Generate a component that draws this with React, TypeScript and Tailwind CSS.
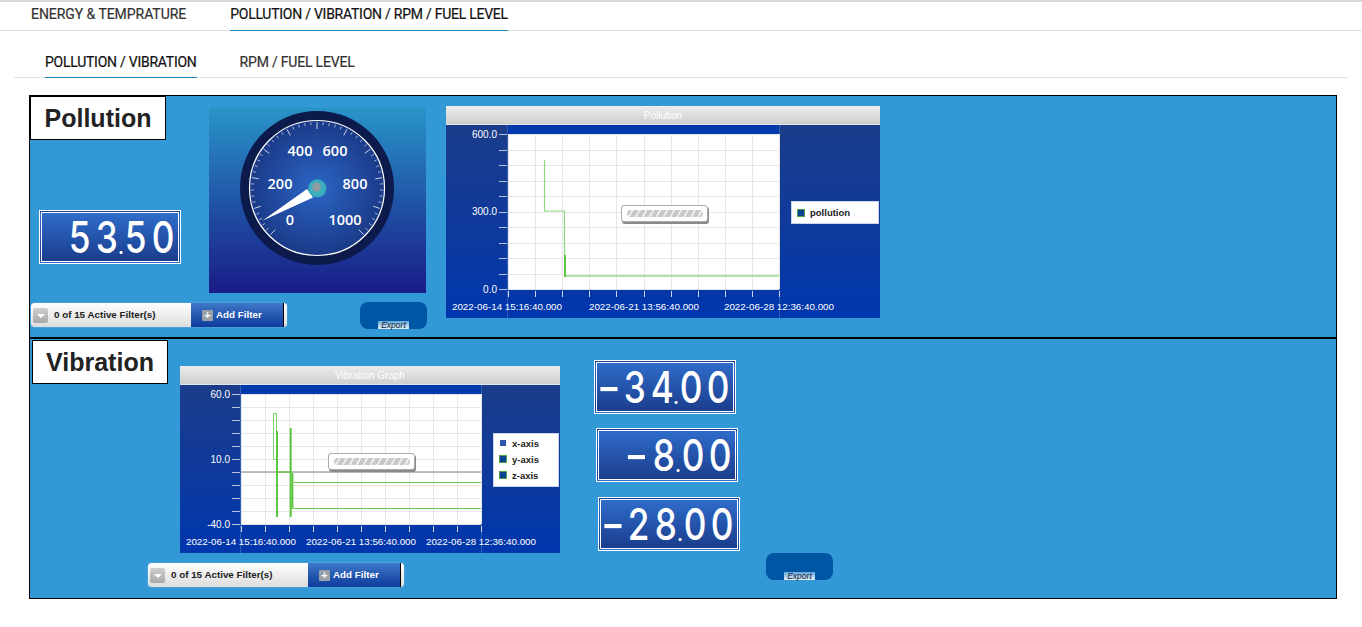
const dialTicks = Array.from({ length: 51 }, (_, i) => i);

function Gauge() {
  return (
    <svg width="217" height="186" viewBox="0 0 217 186" className="block">
      <defs>
        <linearGradient id="gaugeBg" x1="0" y1="0" x2="0" y2="1">
          <stop offset="0" stopColor="#2a95c9" />
          <stop offset="0.55" stopColor="#1f4fa3" />
          <stop offset="1" stopColor="#1a1c88" />
        </linearGradient>
        <radialGradient id="dialBg">
          <stop offset="0" stopColor="#2b66c6" />
          <stop offset="1" stopColor="#1b3a88" />
        </radialGradient>
      </defs>
      <rect width="217" height="186" fill="url(#gaugeBg)" />
      <circle cx="108" cy="81" r="77" fill="#0c1a4c" />
      <circle cx="108" cy="81" r="67.5" fill="url(#dialBg)" stroke="#fff" strokeWidth="1.2" />
      {dialTicks.map((i) => {
        const a = ((-135 + i * 5.4) * Math.PI) / 180;
        const major = i % 5 === 0;
        const r1 = major ? 59 : 63;
        return (
          <line
            key={i}
            x1={108 + Math.sin(a) * r1}
            y1={81 - Math.cos(a) * r1}
            x2={108 + Math.sin(a) * 66}
            y2={81 - Math.cos(a) * 66}
            stroke="#fff"
            strokeOpacity={major ? 0.95 : 0.75}
            strokeWidth="0.8"
          />
        );
      })}
      <g fill="#fff" fontSize="14.5" fontWeight="600" textAnchor="middle" fontFamily="'Open Sans', sans-serif">
        <text x="91" y="49">400</text>
        <text x="126" y="49">600</text>
        <text x="71" y="82">200</text>
        <text x="146" y="82">800</text>
        <text x="81" y="118">0</text>
        <text x="136" y="118">1000</text>
      </g>
      <polygon points="53.3,113.7 98,82 104,90.5" fill="#fff" />
      <circle cx="108.3" cy="81.3" r="9" fill="#3aaebf" />
      <circle cx="107.5" cy="80" r="4.5" fill="#8f9ca4" />
    </svg>
  );
}

function Lcd({ value, className }: { value: string; className?: string }) {
  const chars = value.split("");
  return (
    <div className={"flex h-[54px] w-[142px] items-center justify-end border-[3px] border-double border-white bg-gradient-to-b from-[#2f6cca] to-[#1b3d8d] pr-[2px] font-['Inter',sans-serif] text-[44px] leading-none font-medium text-white " + (className ?? "")}>
      {chars.map((c, i) =>
        c === "." ? (
          <span key={i} className="-mx-[2px] mb-[4px] self-end text-[18px] leading-none font-bold">.</span>
        ) : c === "-" ? (
          <span key={i} className="w-[27px] scale-x-[1.2] text-center">-</span>
        ) : (
          <span key={i} className="w-[27px] scale-x-[0.8] text-center">{c}</span>
        )
      )}
    </div>
  );
}

function FilterBar({ className }: { className?: string }) {
  return (
    <div className={"flex h-6 w-[256px] items-stretch rounded-[4px] bg-gradient-to-b from-white to-[#dcdcdc] pr-[3px] font-['Liberation_Sans',sans-serif] text-[9.8px] font-bold shadow-[0_0_1px_#fff] " + (className ?? "")}>
      <div className="flex w-40 items-center pl-[2px]">
        <span className="flex h-[15px] w-[15px] items-center justify-center rounded-[2px] bg-gradient-to-b from-[#d0d0d0] to-[#a8a8a8]">
          <span className="mt-[2px] h-0 w-0 border-x-[4px] border-t-[4px] border-x-transparent border-t-white" />
        </span>
        <span className="ml-[6px] text-[#222]">0 of 15 Active Filter(s)</span>
      </div>
      <div className="flex flex-1 items-center border-r-[1.5px] border-black bg-gradient-to-b from-[#3f78c8] to-[#0f3a9c] pl-[11px] text-white">
        <span className="mr-[3px] flex h-[11px] w-[11px] items-center justify-center rounded-[1px] bg-[#9aa0a8] text-[11px] leading-none text-white">+</span>
        Add Filter
      </div>
    </div>
  );
}

function ExportButton({ className }: { className?: string }) {
  return (
    <div className={"flex h-[27px] w-[67px] items-end justify-center rounded-lg bg-[#0055a4] " + (className ?? "")}>
      <span className="bg-gradient-to-b from-[#5fa6dc] to-[#e8f0f6] px-[3px] font-['Liberation_Sans',sans-serif] text-[8.5px] leading-[8px] text-[#123] italic">Export</span>
    </div>
  );
}

function TitleBox({ label, className }: { label: string; className?: string }) {
  return (
    <div className={"flex h-11 w-[136px] items-center justify-center border border-black bg-white pt-[2px] font-['Liberation_Sans',sans-serif] text-[25px] font-bold text-[#222] " + (className ?? "")}>
      {label}
    </div>
  );
}

type ChartProps = {
  title: string;
  width: number;
  height: number;
  plot: { x: number; y: number; w: number; h: number };
  hDiv: number;
  yLabels: { label: string; at: number }[];
  dates: number[];
  children: React.ReactNode;
  overlay: React.ReactNode;
};

function Chart({ title, width, height, plot, hDiv, yLabels, dates, children, overlay }: ChartProps) {
  const vs = Array.from({ length: 11 }, (_, i) => Math.round(plot.x + (plot.w * i) / 10) + 0.5);
  const hs = Array.from({ length: hDiv + 1 }, (_, i) => Math.round(plot.y + (plot.h * i) / hDiv) + 0.5);
  return (
    <div style={{ width }}>
      <div className="flex h-[19px] items-center justify-center border-b border-[#dfe6ee] bg-gradient-to-b from-[#ececec] to-[#cfcfcf] font-['Liberation_Sans',sans-serif] text-[10px] text-white">
        {title}
      </div>
      <div className="relative bg-gradient-to-b from-[#1a3c8a] to-[#0036ad]" style={{ height }}>
        <svg width={width} height={height} className="block font-['Liberation_Sans',sans-serif]">
          <rect x={plot.x} y={0} width={plot.w} height={plot.y} fill="#0039ab" />
          <line x1={plot.x - 0.5} y1={0} x2={plot.x - 0.5} y2={height} stroke="#3f6fc0" strokeWidth="0.7" />
          <line x1={plot.x + plot.w + 0.5} y1={0} x2={plot.x + plot.w + 0.5} y2={height} stroke="#3f6fc0" strokeWidth="0.7" />
          <rect x={plot.x} y={plot.y} width={plot.w} height={plot.h} fill="#fff" />
          {vs.map((x) => (
            <g key={x}>
              <line x1={x} y1={plot.y} x2={x} y2={plot.y + plot.h} stroke="#e6e6e6" />
              <line x1={x} y1={plot.y + plot.h + 2} x2={x} y2={plot.y + plot.h + 8} stroke="#cfd8ea" />
            </g>
          ))}
          {hs.map((y) => (
            <g key={y}>
              <line x1={plot.x} y1={y} x2={plot.x + plot.w} y2={y} stroke="#e6e6e6" />
              <line x1={plot.x - 9} y1={y} x2={plot.x - 1} y2={y} stroke="#b9c4dc" />
            </g>
          ))}
          {yLabels.map((l) => (
            <text key={l.label} x={plot.x - 11} y={l.at + 3.5} fill="#fff" fontSize="10" textAnchor="end">{l.label}</text>
          ))}
          {children}
          {["2022-06-14 15:16:40.000", "2022-06-21 13:56:40.000", "2022-06-28 12:36:40.000"].map((d, i) => (
            <text key={d} x={dates[i]} y={height - 8} fill="#fff" fontSize="9.8" textAnchor="middle">{d}</text>
          ))}
        </svg>
        {overlay}
      </div>
    </div>
  );
}

function LoadingBar({ className }: { className: string }) {
  return (
    <div className={"absolute flex h-[17px] w-[87px] items-center justify-center rounded-[3px] border border-[#aaa] bg-white shadow-[1px_2px_0_#8a8a8a] " + className}>
      <div className="h-[7px] w-[76px] rounded-full bg-[repeating-linear-gradient(120deg,#c8c8c8_0px,#c8c8c8_4px,#ececec_4px,#ececec_6px)]" />
    </div>
  );
}

function LegendRow({ label, swatch }: { label: string; swatch?: string }) {
  return (
    <div className="flex items-center font-['Liberation_Sans',sans-serif] text-[9.5px] leading-[11px] font-bold text-[#222]">
      <span className={swatch ?? "h-[8px] w-[8px] border border-[#4fa04f] bg-[#0d3f90]"} />
      <span className="ml-[5px]">{label}</span>
    </div>
  );
}

export default function App() {
  return (
    <div className="min-h-[627px] bg-white font-['Roboto',sans-serif]">
      <div className="flex h-[31px] gap-[44px] border-t-2 border-b border-t-[#d9d9d9] border-b-[#dee2e6] pl-[31px] text-[14px] text-[#333] [-webkit-text-stroke:0.2px]">
        <div className="pt-[2px] tracking-[-0.05px]">ENERGY &amp; TEMPRATURE</div>
        <div className="h-[29px] border-b border-[#1f86b8] pt-[2px] tracking-[-0.25px] text-[#111]">POLLUTION / VIBRATION / RPM / FUEL LEVEL</div>
      </div>

      <div className="mx-[14px] mt-[17px] flex h-[30px] gap-[43px] border-b border-[#dee2e6] pl-[31px] text-[14px] text-[#333] [-webkit-text-stroke:0.2px]">
        <div className="h-[30px] border-b border-[#1f86b8] pt-[4px] tracking-[-0.25px] text-[#111]">POLLUTION / VIBRATION</div>
        <div className="pt-[4px] tracking-[-0.2px]">RPM / FUEL LEVEL</div>
      </div>

      <div className="mt-[17px] ml-[29px] flex h-[243px] w-[1308px] border border-black bg-[#3398d6]">
        <div className="flex w-[397px] flex-col">
          <div className="flex h-[197px]">
            <div className="w-[179px]">
              <TitleBox label="Pollution" />
              <Lcd value="53.50" className="mt-[70px] ml-[9px]" />
            </div>
            <div className="mt-[11px]"><Gauge /></div>
          </div>
          <div className="flex items-start justify-between">
            <FilterBar className="mt-[10px] ml-[1px]" />
            <ExportButton className="mt-[9px]" />
          </div>
        </div>
        <div className="mt-[10px] ml-[19px]">
          <Chart
            title="Pollution"
            width={434}
            height={193}
            plot={{ x: 62, y: 9, w: 271, h: 155 }}
            hDiv={10}
            yLabels={[{ label: "600.0", at: 9 }, { label: "300.0", at: 86.5 }, { label: "0.0", at: 164 }]}
            dates={[61, 198, 333]}
            overlay={
              <>
                <LoadingBar className="top-[80px] left-[175px]" />
                <div className="absolute top-[76px] left-[345px] flex h-[23px] w-[88px] items-center border border-[#c8d4e8] bg-white pl-[5px]">
                  <LegendRow label="pollution" />
                </div>
              </>
            }
          >
            <polyline points="98.5,35 98.5,86 118.5,86 118.5,130" fill="none" stroke="#8fd680" strokeWidth="1.2" />
            <line x1="119" y1="130" x2="119" y2="152" stroke="#5cc63c" strokeWidth="2" />
            <line x1="119" y1="151" x2="333" y2="151" stroke="#62c94a" strokeWidth="1.2" />
          </Chart>
        </div>
      </div>

      <div className="ml-[29px] flex h-[261px] w-[1308px] border border-black bg-[#3398d6]">
        <div className="w-[531px]">
          <div className="flex">
            <TitleBox label="Vibration" className="mt-[1px] ml-[2px]" />
            <div className="mt-[27px] ml-[12px]">
              <Chart
                title="Vibration Graph"
                width={380}
                height={168}
                plot={{ x: 61, y: 9, w: 240, h: 130 }}
                hDiv={10}
                yLabels={[{ label: "60.0", at: 9 }, { label: "10.0", at: 74 }, { label: "-40.0", at: 139 }]}
                dates={[61, 181, 301]}
                overlay={
                  <>
                    <LoadingBar className="top-[68px] left-[148px]" />
                    <div className="absolute top-[48px] left-[313px] flex h-[54px] w-[66px] flex-col justify-center gap-[5px] border border-[#c8d4e8] bg-white pb-[2px] pl-[5px]">
                      <LegendRow label="x-axis" swatch="mx-[1px] h-[6px] w-[6px] bg-[#2a55a8]" />
                      <LegendRow label="y-axis" />
                      <LegendRow label="z-axis" />
                    </div>
                  </>
                }
              >
                <line x1="61" y1="87" x2="301" y2="87" stroke="#aaa" strokeWidth="1.5" />
                <rect x="93.5" y="28.5" width="3" height="46" fill="none" stroke="#7fd070" strokeWidth="1" />
                <line x1="97" y1="46" x2="97" y2="132" stroke="#5cc63c" strokeWidth="2" />
                <line x1="97" y1="87" x2="111" y2="87" stroke="#5cc63c" strokeWidth="1.2" />
                <line x1="110.7" y1="43" x2="110.7" y2="132" stroke="#5cc63c" strokeWidth="2" />
                <line x1="112.5" y1="88" x2="112.5" y2="123" stroke="#5cc63c" strokeWidth="1.8" />
                <line x1="112" y1="97.5" x2="301" y2="97.5" stroke="#6ccc58" strokeWidth="1" />
                <line x1="112" y1="123.5" x2="301" y2="123.5" stroke="#6ccc58" strokeWidth="1" />
              </Chart>
            </div>
          </div>
          <FilterBar className="mt-[10px] ml-[118px]" />
        </div>
        <div className="mt-[21px] ml-[33px] flex flex-col">
          <Lcd value="-34.00" />
          <Lcd value="-8.00" className="mt-[14px] ml-[2px]" />
          <Lcd value="-28.00" className="mt-[15px] ml-[4px]" />
          <ExportButton className="mt-[2px] ml-[172px]" />
        </div>
      </div>
    </div>
  );
}
